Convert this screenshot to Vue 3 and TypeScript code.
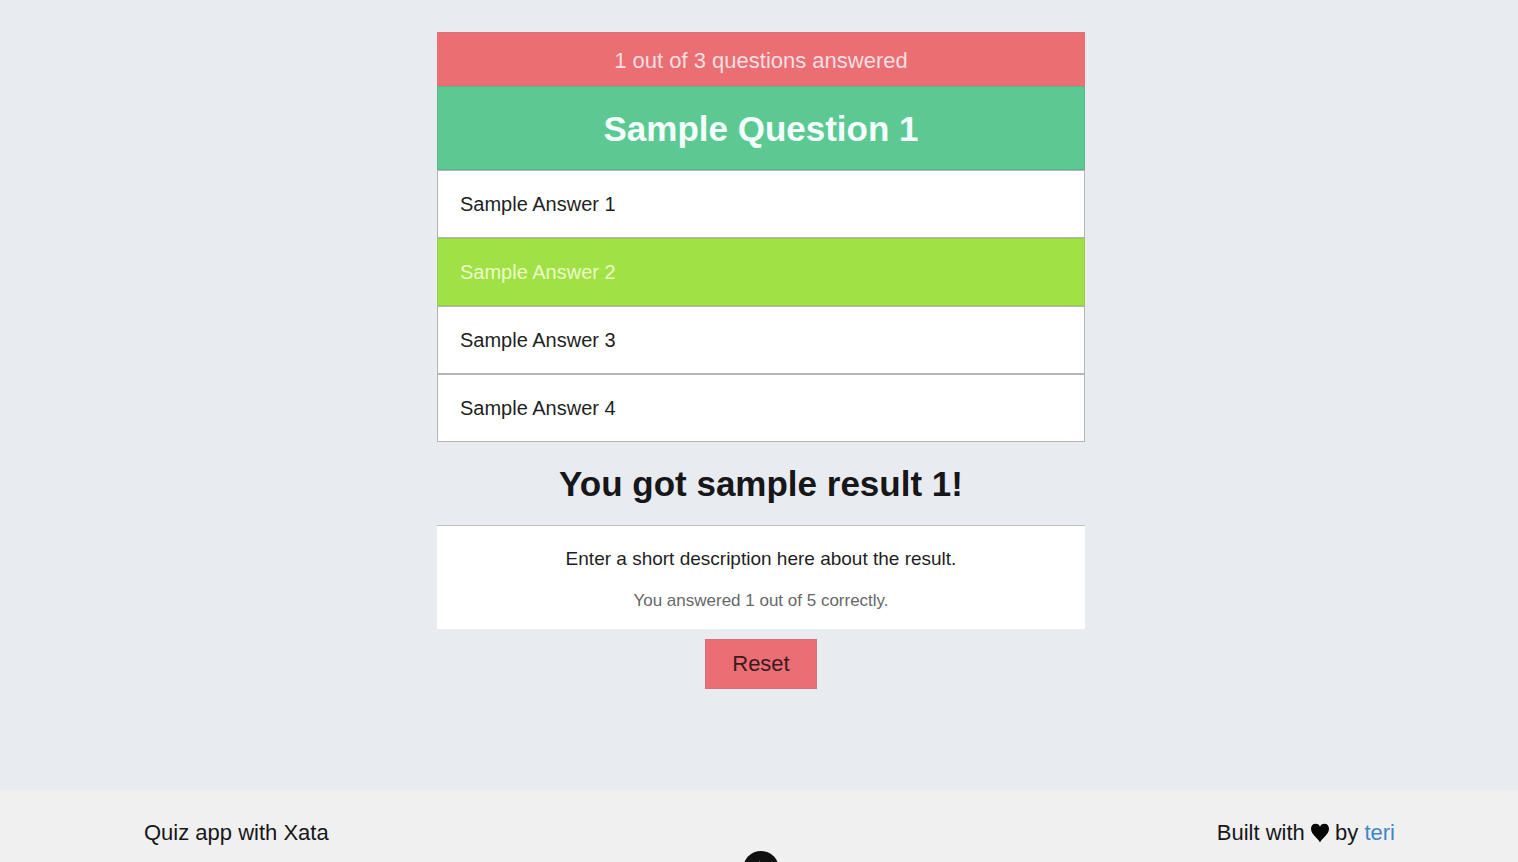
<script setup lang="ts">
import { ref } from 'vue'

const answers: string[] = ['Sample Answer 1', 'Sample Answer 2', 'Sample Answer 3', 'Sample Answer 4']
const selected = ref<number | null>(1)

function choose(index: number): void {
  selected.value = index
}

function reset(): void {
  selected.value = null
}
</script>

<template>
  <div class="page">
    <main class="quiz">
      <section class="panel">
        <p class="progress">1 out of 3 questions answered</p>
        <h1 class="question">Sample Question 1</h1>
        <div class="answers">
          <button
            v-for="(answer, index) in answers"
            :key="answer"
            type="button"
            class="answer"
            :class="{ chosen: selected === index }"
            :aria-pressed="selected === index"
            @click="choose(index)"
          >{{ answer }}</button>
        </div>
      </section>
      <section class="result">
        <h2 class="result-title">You got sample result 1!</h2>
        <div class="result-card">
          <p class="description">Enter a short description here about the result.</p>
          <p class="score">You answered 1 out of 5 correctly.</p>
        </div>
      </section>
      <button type="button" class="reset" @click="reset">Reset</button>
    </main>
    <footer class="footer">
      <span>Quiz app with Xata</span>
      <span class="credit">
        Built with
        <svg class="heart" viewBox="0 0 18 20" aria-hidden="true">
          <path d="M9 19.500C8 16.200 0 11.800 0 5.800C0 2.700 2 0.800 4.600 0.800C6.800 0.800 8.300 2 9 3.800C9.700 2 11.200 0.800 13.400 0.800C16 0.800 18 2.700 18 5.800C18 11.800 10 16.200 9 19.500Z" />
        </svg>
        by <a href="#">teri</a>
      </span>
      <svg class="badge" viewBox="0 0 36 36" aria-hidden="true">
        <circle cx="18" cy="18" r="18" fill="#111" />
        <path d="M17 9L11 20H17V28L24 16H17Z" fill="#777" />
      </svg>
    </footer>
  </div>
</template>

<style>
body {
  margin: 0;
}
</style>

<style scoped>
.page {
  display: flex;
  flex-direction: column;
  box-sizing: border-box;
  height: 100vh;
  overflow: hidden;
  background: #e8ebf0;
  color: #17171a;
  font-family: "Liberation Sans", Arial, sans-serif;
}

.quiz {
  display: flex;
  flex: 1;
  flex-direction: column;
  align-items: center;
  padding: 32px 0 0 4px;
}

.panel,
.result {
  width: 100%;
  max-width: 648px;
}

.progress,
.question,
.result-title,
.description,
.score {
  margin: 0;
  text-align: center;
}

.progress {
  padding: 16px 0 13px;
  border-top: 1px solid #d4737f;
  background: #eb6e73;
  color: #f8dfe2;
  font-size: 22px;
  line-height: 24px;
}

.question {
  padding: 22px 0 20px;
  border: 1px solid #58b78a;
  background: #5dc992;
  color: #f2fffc;
  font-size: 35px;
  line-height: 40px;
}

.answers {
  display: flex;
  flex-direction: column;
}

.answer {
  padding: 21px 22px;
  border: 1px solid #b3b5b8;
  background: #fff;
  color: #1f1f1f;
  font: 20px/24px "Liberation Sans", Arial, sans-serif;
  text-align: left;
}

.answer.chosen {
  border-color: #98ce50;
  background: #a0e245;
  color: #edfbc8;
}

.result-title {
  padding: 22px 0 21px;
  font-size: 35px;
  line-height: 40px;
}

.result-card {
  padding: 21px 0 16px;
  border-top: 1px solid #bfc4c5;
  background: #fff;
}

.description {
  color: #1f1f1f;
  font-size: 19px;
  line-height: 24px;
}

.score {
  margin-top: 18px;
  color: #67676a;
  font-size: 17px;
  line-height: 24px;
}

.reset {
  margin-top: 10px;
  padding: 12px 26px;
  border: 1px solid #d9717b;
  background: #eb6e75;
  color: #3c1a20;
  font: 22px/24px "Liberation Sans", Arial, sans-serif;
}

.footer {
  position: relative;
  display: flex;
  justify-content: space-between;
  padding: 31px 123px 17px 144px;
  background: #f0f0f0;
  font-size: 22px;
  line-height: 24px;
}

.heart {
  width: 18px;
  height: 20px;
  vertical-align: -3px;
  fill: #050505;
}

.footer a {
  color: #3f86c8;
  text-decoration: none;
}

.badge {
  position: absolute;
  top: 61px;
  left: 50%;
  width: 36px;
  height: 36px;
  margin-left: -16px;
}
</style>
